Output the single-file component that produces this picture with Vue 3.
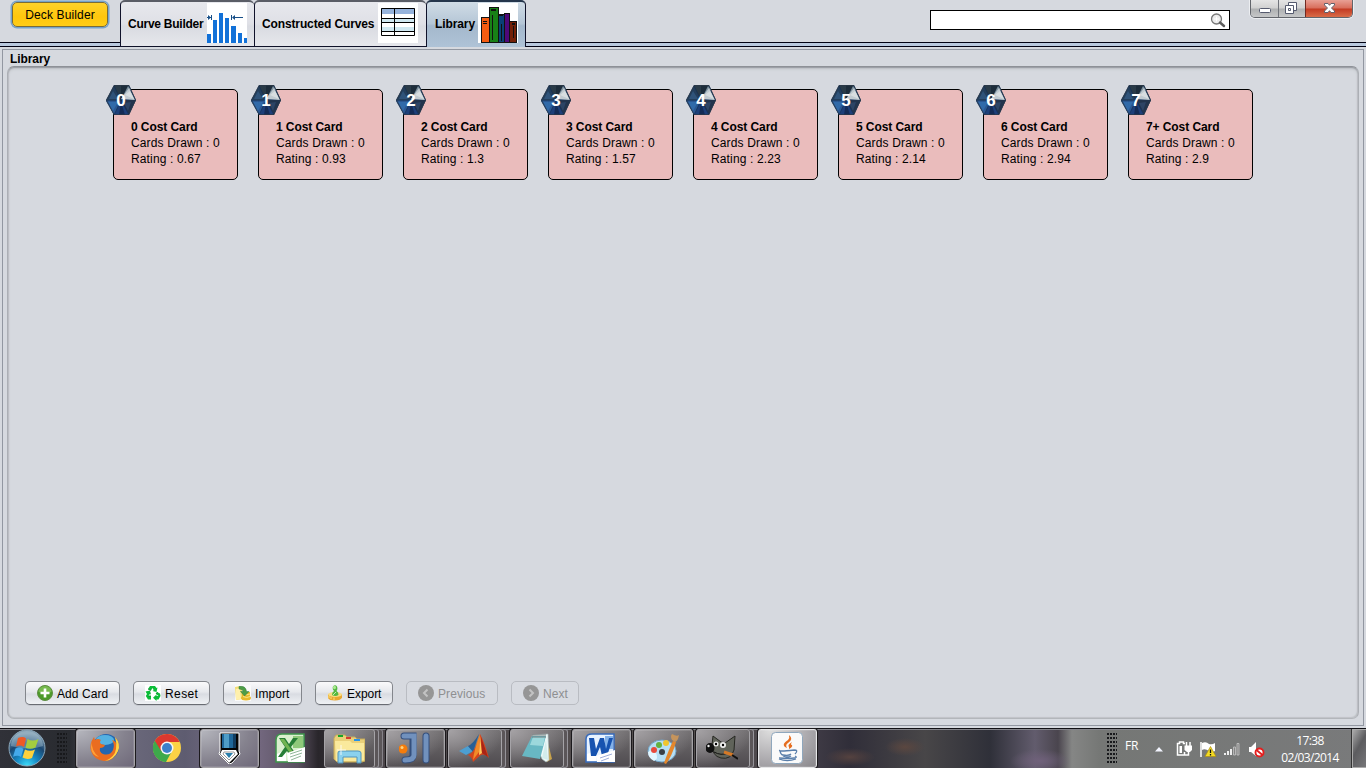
<script setup>
const cards = [
  { cost: '0', title: '0 Cost Card', rating: '0.67' },
  { cost: '1', title: '1 Cost Card', rating: '0.93' },
  { cost: '2', title: '2 Cost Card', rating: '1.3' },
  { cost: '3', title: '3 Cost Card', rating: '1.57' },
  { cost: '4', title: '4 Cost Card', rating: '2.23' },
  { cost: '5', title: '5 Cost Card', rating: '2.14' },
  { cost: '6', title: '6 Cost Card', rating: '2.94' },
  { cost: '7', title: '7+ Cost Card', rating: '2.9' }
]
const tasks = [
  { id: 'firefox', kind: 'open bright' },
  { id: 'chrome', kind: '' },
  { id: 'pen', kind: 'open bright' },
  { id: 'excel', kind: '' },
  { id: 'explorer', kind: 'open stack2' },
  { id: 'idea', kind: 'open' },
  { id: 'matlab', kind: 'open stack' },
  { id: 'notepad', kind: 'open stack' },
  { id: 'word', kind: 'open' },
  { id: 'paint', kind: 'open' },
  { id: 'gimp', kind: 'open stack' },
  { id: 'java', kind: 'open active' }
]
</script>

<template>
  <div class="screen">
    <header class="top">
      <button class="deck">Deck Builder</button>
      <nav class="tabs">
        <div class="tab t1">
          <span>Curve Builder</span>
          <svg width="40" height="40" viewBox="0 0 40 40">
            <rect width="40" height="40" fill="#fff" />
            <g fill="#1271d8">
              <rect x="0" y="31" width="4" height="9" /><rect x="6" y="17" width="4" height="23" />
              <rect x="12" y="10" width="4" height="30" /><rect x="18" y="15" width="4" height="25" />
              <rect x="24" y="23" width="5" height="17" /><rect x="31" y="30" width="4" height="10" />
              <rect x="37" y="35" width="3" height="5" />
            </g>
            <path d="M0 14.500h4M4.500 12v5M24.500 12v5M26 14.500h10" stroke="#174f88" />
            <path d="M1 12l3 2.500-3 2.500zM28 12l-3 2.500 3 2.500z" fill="#174f88" />
          </svg>
        </div>
        <div class="tab t2">
          <span>Constructed Curves</span>
          <svg width="40" height="40" viewBox="0 0 40 40">
            <rect width="40" height="40" fill="#fff" />
            <path d="M3 5h34v6H3z" fill="#96b3dc" />
            <path d="M3 15h34v4H3zM3 24h34v4H3z" fill="#d0e8f1" />
            <path d="M3.500 5.500h33v27h-33zM3 15.500h34M3 19.500h34M3 28.500h34M16.500 5v28" fill="none" stroke="#000" />
          </svg>
        </div>
        <div class="tab t3">
          <span>Library</span>
          <svg width="40" height="40" viewBox="0 0 40 40">
            <rect width="40" height="40" fill="#fff" />
            <g stroke="#111">
              <rect x="3.500" y="14.500" width="8" height="25" fill="#f55c12" />
              <rect x="20.500" y="11.500" width="6" height="28" fill="#0a4076" />
              <rect x="26.500" y="10.500" width="5" height="29" fill="#4e0879" />
              <rect x="31.500" y="18.500" width="7" height="21" fill="#732008" />
              <rect x="11.500" y="4.500" width="9" height="35" fill="#188017" />
              <path d="M5 18.500h4M5 20.500h4M14.500 12v25M23.500 21v17M35.500 23v12" />
              <path d="M13 7h5M21 12h4M34 21h3" stroke-width="2" />
            </g>
          </svg>
        </div>
      </nav>
      <div class="search">
        <svg width="16" height="16" viewBox="0 0 16 16">
          <circle cx="6.500" cy="6" r="5" fill="#ececec" stroke="#777" stroke-width="1.300" />
          <path d="M4 6h5M6.500 3.500v5" stroke="#fff" />
          <path d="M10 9.500l4 3.500" stroke="#5d5d5d" stroke-width="2.500" stroke-linecap="round" />
        </svg>
      </div>
      <div class="win">
        <div class="wb">
          <svg width="27" height="17" viewBox="0 0 27 17"><rect x="8.500" y="8.500" width="11" height="4" rx="1" fill="#fff" stroke="#555a6e" /></svg>
        </div>
        <div class="wb mid">
          <svg width="26" height="17" viewBox="0 0 26 17"><g fill="#fff" stroke="#555a6e"><path d="M9.500 2.500h8v8h-8z" /><path d="M6.500 5.500h8v8h-8zM9.500 8.500h2v2h-2z" fill-rule="evenodd" /></g></svg>
        </div>
        <div class="wb close">
          <svg width="47" height="17" viewBox="0 0 47 17"><path d="M18.500 3.500h3.500l1.500 1.800 1.500-1.800h3.500v1.500l-3 3 3 3v1.500H25l-1.500-1.800-1.500 1.800h-3.500V11l3-3-3-3z" fill="#fff" stroke="#62606c" /></svg>
        </div>
      </div>
    </header>

    <section class="frame">
      <h1>Library</h1>
      <div class="inner">
        <div class="cards">
          <article v-for="c in cards" :key="c.cost" class="card">
            <div class="gem">
              <svg width="30" height="30" viewBox="0 0 30 30">
                <path d="M8 0h15l7 15-7 15H8L0 16z" fill="#1c3b64" />
                <path d="M8 0h8l-1 15z" fill="#2a3b48" />
                <path d="M15 0h8l-8 15z" fill="#1d2d3b" />
                <path d="M22 1l3 4-10 10z" fill="#7b8f9c" />
                <path d="M23 3l6 12-14-1z" fill="#c0cad0" />
                <path d="M24 6l4 8-9-4z" fill="#d7dde0" />
                <path d="M30 15l-7 14-8-14z" fill="#22344d" />
                <path d="M25 17l-3 9-4-8z" fill="#2d4465" />
                <path d="M23 30H8l7-15z" fill="#1d3f79" />
                <path d="M19 30l-4-13-2 13z" fill="#142c56" />
                <path d="M8 30L0 15h15z" fill="#2a5792" />
                <path d="M2 17l10 0-5 9z" fill="#316aa9" />
                <path d="M0 15L8 1l7 14z" fill="#233e5b" />
                <path d="M3 14l4-8 5 8z" fill="#2f5379" />
                <path d="M8 1l7 14 8 15M15 15L8 30M0 15.500h15" stroke="#14263e" stroke-width=".7" opacity=".6" fill="none" />
                <path d="M8 .5h15l6.500 14.500L23 29.500H8L.5 15z" fill="none" stroke="#2c3a48" opacity=".75" />
              </svg>
              <b>{{ c.cost }}</b>
            </div>
            <strong>{{ c.title }}</strong>
            <span>Cards Drawn : 0</span>
            <span>Rating : {{ c.rating }}</span>
          </article>
        </div>
        <div class="actions">
          <button class="btn b1">
            <svg width="16" height="16" viewBox="0 0 16 16"><circle cx="8" cy="8" r="7.500" fill="#4d9a2b" stroke="#5f8d44" /><path d="M1.500 7a6.500 6 0 0 1 13 0q-6 2-13 0z" fill="#86c45c" opacity=".75" /><path d="M8 3.500v9M3.500 8h9" stroke="#fff" stroke-width="2.600" /></svg>
            <span>Add Card</span>
          </button>
          <button class="btn b2">
            <svg width="16" height="16" viewBox="0 0 16 16"><rect width="16" height="16" fill="#fff" /><g fill="#0bbd38"><path d="M5 1h5l1.500 2 1-.5-1 4.500L7.500 6l1.200-.8L7.500 3 6 5.500 3 4z" /><path d="M.5 6.500L5 5.500l1 4-1.200-.6L3.500 11H6v3.500H3L.8 11l1.200-2z" /><path d="M12 7l3 1.500.5 2.500-2 3.500h-2V16L8 12.700 11.500 9.500V11h2L11 9z" /></g><path d="M3 4l3 1.500M3.500 11H6M11 9l1.500-2" stroke="#087b2a" stroke-width=".8" /></svg>
            <span>Reset</span>
          </button>
          <button class="btn b3">
            <svg width="16" height="16" viewBox="0 0 16 16"><rect width="16" height="16" fill="#fafafa" /><path d="M0 2l5-1 2 2v11l-6 1z" fill="#f2dc72" /><path d="M1 4l4-1 1 11-5 1z" fill="#fff0ac" /><g fill="#e9b92c"><ellipse cx="11" cy="13" rx="5" ry="2.500" /><path d="M7 7h8v6H7z" /></g><path d="M8 11.500q4 2 7 0M8 9q4 1.500 7 0" stroke="#f7e583" fill="none" /><path d="M4 1.500q7-1 7.500 5H14L9.500 11 5.500 6.500H8Q8 4 4 4z" fill="#4e9d46" stroke="#2e7a3f" stroke-width=".5" /></svg>
            <span>Import</span>
          </button>
          <button class="btn b4">
            <svg width="16" height="16" viewBox="0 0 16 16"><path d="M1 9v4q1 2.500 7 2.500t7-3V9z" fill="#e8a731" /><ellipse cx="8" cy="9.500" rx="7" ry="2.500" fill="#f9dc83" /><path d="M5 10q0-3 2-4Q5 4 6 1.500 8-1 10 1.500 11 4 9.500 6q2 1 2 4-3 2-6.500 0z" fill="#54b843" /><ellipse cx="7.500" cy="2.500" rx="1.500" ry="1.800" fill="#aceb92" /><path d="M6 10l3-3" stroke="#c1efad" /><path d="M2 11v2M4 12v2M7 12.500V15" stroke="#ffdf79" /></svg>
            <span>Export</span>
          </button>
          <button class="btn b5 off">
            <svg width="16" height="16" viewBox="0 0 16 16"><circle cx="8" cy="8" r="8" fill="#969696" /><path d="M9.500 4.500L6 8l3.500 3.500" fill="none" stroke="#c3c3c3" stroke-width="2" /></svg>
            <span>Previous</span>
          </button>
          <button class="btn b6 off">
            <svg width="16" height="16" viewBox="0 0 16 16"><circle cx="8" cy="8" r="8" fill="#969696" /><path d="M6.500 4.500L10 8l-3.500 3.500" fill="none" stroke="#c3c3c3" stroke-width="2" /></svg>
            <span>Next</span>
          </button>
        </div>
      </div>
    </section>

    <footer class="bar">
      <svg class="orb" width="38" height="38" viewBox="0 0 38 38">
        <defs>
          <radialGradient id="orb" cx=".5" cy="1" r=".9"><stop offset="0" stop-color="#3fe0fa" /><stop offset=".35" stop-color="#1689c5" /><stop offset=".7" stop-color="#1c4872" /><stop offset="1" stop-color="#7c98ac" /></radialGradient>
        </defs>
        <circle cx="19" cy="19" r="18" fill="url(#orb)" stroke="#8ca8bb" />
        <path d="M3 17a16 15 0 0 1 32 0q-15 5-32 0z" fill="#b9d1df" opacity=".38" />
        <path d="M10 9q5-2 8 .5L16 18q-4-2.500-8-.5z" fill="#ee5a25" />
        <path d="M19.500 10q5 3 11 0l-3 8.500q-5 2.500-10 .3z" fill="#a3cd3f" />
        <path d="M7.500 19.500q4-2 8 .2L13 28q-3-2.500-8-.3z" fill="#44a9ea" />
        <path d="M17 20.500q5 2.500 10 0L24 29q-5 2-9.500-.5z" fill="#fdd13c" />
      </svg>
      <div class="grip g1"></div>
      <div class="tasks">
        <div v-for="t in tasks" :key="t.id" class="slot">
          <div class="task" :class="t.kind">
            <svg width="32" height="32" viewBox="0 0 32 32">
              <g v-if="t.id === 'firefox'">
                <circle cx="17" cy="15" r="13" fill="#2366b0" /><ellipse cx="16" cy="8" rx="9" ry="5" fill="#54b1e2" />
                <path d="M25 4q7 7 4 15-4 10-14 10-10-1-13-10Q0 12 5 5l1 3q3-2 6 0-2 2 0 4l4 1q-1 3-5 3-1 4 3 6 7 2 10-4 2-6-1-10 4 1 5 5 1-4-3-9z" fill="#ea6d20" />
                <path d="M26 5q6 7 3 14-4 9-13 10 10-4 11-12 1-6-1-12z" fill="#ffd443" />
                <path d="M3 10q-1 9 7 15-8-2-8-10z" fill="#ffa136" />
              </g>
              <g v-else-if="t.id === 'chrome'">
                <circle cx="16" cy="16" r="14" fill="#fbd245" />
                <path d="M16 16L3.800 9A14 14 0 0 1 28.500 10H16z" fill="#dc382e" />
                <path d="M3.800 9A14 14 0 0 0 15 30l6-11-5-3z" fill="#3eaa4b" />
                <path d="M3.800 9L10 19l6-3V9z" fill="#dc382e" /><path d="M3.800 9l6.500 11 4 2L15 30A14 14 0 0 1 3.800 9z" fill="#3eaa4b" />
                <circle cx="16" cy="16" r="6.500" fill="#f6f6f6" /><circle cx="16" cy="16" r="5" fill="#3d80cc" />
              </g>
              <g v-else-if="t.id === 'pen'">
                <path d="M7 1h19v18l1 3-8 9-3 1-10-10 1-3z" fill="#050505" stroke="#fff" stroke-width="1" />
                <path d="M9 2h14v14H9z" fill="#1f679a" /><path d="M11 2h5v14h-5z" fill="#4f9dc7" /><path d="M20 2h3v14h-3z" fill="#123d60" />
                <path d="M9 18h14l2 4-9 9-9-9z" fill="#fff" /><path d="M11 20h10l1 2-6 6-6-6z" fill="none" stroke="#999" /><path d="M12 21h8l-4 5z" fill="#297fac" />
              </g>
              <g v-else-if="t.id === 'excel'">
                <path d="M1 8q0-6 6-6h22v28H1z" fill="#d9efce" stroke="#3d944b" stroke-width="1.500" />
                <path d="M18 4h10v12H18z" fill="#8fc87a" /><path d="M2 22l9-4v11H2z" fill="#fff" />
                <path d="M4 6h6l4 6 4-6h5l-7 9 7 10h-7l-4-6-5 6H3l7-10z" fill="#277e36" /><path d="M5 7h4l12 17h-4z" fill="#72b452" />
                <path d="M12 21l18-6v15H13z" fill="#fff" /><path d="M15 22l12-4M15 25l12-4M16 28l10-4" stroke="#91b69b" />
              </g>
              <g v-else-if="t.id === 'explorer'">
                <path d="M1 6l2-3h9l2 2h8l2 2h8v22l-3 1H4l-3-3z" fill="#ead079" stroke="#c5aa5b" />
                <path d="M2 9h15l2 2h12v17l-3 1H3z" fill="#fae99c" />
                <path d="M5 4h5" stroke="#16a62b" stroke-width="2" /><path d="M13 6h5" stroke="#d73c2f" stroke-width="2" /><path d="M21 8h6" stroke="#2693ea" stroke-width="2" />
                <path d="M5 31V21q0-2 2-2h18q3 0 3 2v10h-4v-6H10v6z" fill="#8bd1ed" stroke="#5094bd" /><path d="M8 13v10M4 18h9" stroke="#fff" opacity=".8" />
              </g>
              <g v-else-if="t.id === 'idea'" stroke-linecap="round" fill="none">
                <path d="M5 4h9v19q0 5-8 5" stroke="#344f7c" stroke-width="7" /><path d="M27 4v24" stroke="#344f7c" stroke-width="7" />
                <path d="M5 4h10v19q0 5-9 5" stroke="#7191bd" stroke-width="5" /><path d="M27 4v24" stroke="#7191bd" stroke-width="5" />
                <circle cx="4" cy="17" r="4.500" fill="#f57c0b" /><circle cx="3" cy="15.500" r="1.500" fill="#ffd17b" />
              </g>
              <g v-else-if="t.id === 'matlab'">
                <path d="M1 19l9-5 5 5-7 4z" fill="#4c9fd2" /><path d="M10 14q5-2 11-12l-6 18z" fill="#285f95" />
                <path d="M22 2q4 7 9 24-4-5-8-3-4 3-8 7-1-5-5-7 7-2 12-21z" fill="#d5441c" />
                <path d="M22 2l-1 18q-3 4-6 8 1-10 7-26z" fill="#f28b28" /><path d="M22 4l2 17-3 2z" fill="#ffc95a" /><path d="M23 5l7 20-6-4z" fill="#a92516" />
              </g>
              <g v-else-if="t.id === 'notepad'">
                <path d="M26 3l6 24-5 3z" fill="#c9a34c" /><path d="M12 3l16-1 1 26-3 2-4-3z" fill="#edf8f8" stroke="#a6b8b9" stroke-width=".6" />
                <path d="M12 4h14l-6 23-18-3z" fill="#68b8c3" /><path d="M13 5h12l-2 9-13-1z" fill="#9cd8dc" />
                <path d="M13 2v4m2-4v4m2-4v4m2-4v4m2-4v4m2-4v4m2-4v4" stroke="#717b7c" /><path d="M26 8l2 20-6-2z" fill="#d3ecec" />
              </g>
              <g v-else-if="t.id === 'word'">
                <path d="M1 7q0-5 6-5h22v28H1z" fill="#e7f2ff" stroke="#386bbb" stroke-width="1.500" /><path d="M20 4h8v13h-8z" fill="#84b2e8" />
                <path d="M2 22l9-3v10H2z" fill="#fff" /><path d="M4 6h5l2 11 4-11h4l2 11 3-11h4l-6 18h-5l-2-9-4 9H6z" fill="#1753b0" />
                <path d="M11 24l19-6v12H12z" fill="#fff" /><path d="M15 26l12-4M16 29l8-3" stroke="#9daddb" />
              </g>
              <g v-else-if="t.id === 'paint'">
                <ellipse cx="15" cy="19" rx="14" ry="11" fill="#b6dff5" stroke="#72a4c7" /><path d="M1 20q5-4 8 1 3 5-2 8-6-3-6-9z" fill="#e3f6ff" />
                <circle cx="7" cy="18" r="3" fill="#e74b3d" /><circle cx="12" cy="13" r="3" fill="#63b143" /><circle cx="19" cy="11" r="3" fill="#f1c52e" /><circle cx="15" cy="20" r="3" fill="#3b4046" />
                <path d="M17 31q5-14 9-22l3 1q-4 14-10 22z" fill="#e4872c" /><path d="M25 8q-2-4 0-6 5 3 7 1-1 6-4 7z" fill="#c5945c" />
              </g>
              <g v-else-if="t.id === 'gimp'">
                <path d="M6 13l1-9 8 6 4 1 10-7-1 14q-3 10-13 8-9-2-9-13z" fill="#60635a" stroke="#262722" />
                <ellipse cx="4" cy="16" rx="4.500" ry="5" fill="#111" /><circle cx="2.500" cy="14" r="1.200" fill="#eee" />
                <circle cx="10" cy="12" r="2.500" fill="#eee" /><circle cx="17" cy="13" r="3" fill="#eee" /><circle cx="10" cy="12" r="1.200" /><circle cx="17" cy="13" r="1.200" />
                <path d="M8 20q7 4 14 1" stroke="#111" fill="none" /><path d="M18 20l9 3" stroke="#d57927" stroke-width="3" /><path d="M26 23l6 4" stroke="#111" stroke-width="2" />
              </g>
              <g v-else>
                <rect x=".5" y=".5" width="31" height="31" rx="4" fill="#fafafa" stroke="#8fa7bd" />
                <path d="M16 16q-7-3 1-8 2-2 1-5 5 4-1 8-3 2-1 5zM18 15q-2-2 3-5-2 3 0 3 1 2-3 4z" fill="#e66e20" />
                <g fill="none" stroke="#597eaa" stroke-width="1.300"><path d="M9 18q-3 2 14 0M9 19q1 4 3 4 6 1 8-1M23 18q5 0 1 4M12 24q5 2 8 0M8 27q8 3 17 0M24 24q6 3-16 2" /></g>
              </g>
            </svg>
          </div>
        </div>
      </div>
      <div class="tray">
        <div class="grip g2"></div>
        <span class="lang">FR</span>
        <svg class="up" width="8" height="5" viewBox="0 0 8 5"><path d="M0 4.500L4 0l4 4.500z" fill="#f3f5ff" /></svg>
        <svg class="plug" width="16" height="16" viewBox="0 0 16 16"><g fill="none" stroke="#fff" stroke-width="1.500"><path d="M9 2.500H7.500V1h-4v1.500h-2V14h7v-3M10.500 1v4M14 1v4M12.500 11v3H8" /></g><path d="M8.500 4.500H16V9l-2 2h-3L8.500 9zM3.500 5H6v7H3.500z" fill="#fff" /></svg>
        <svg class="flag" width="17" height="17" viewBox="0 0 17 17"><path d="M1 1v15" stroke="#fff" stroke-width="1.500" /><path d="M2 2q4-2 7 1 3 1 6-1v8q-3 2-6 0-4-3-7-1z" fill="#fff" /><path d="M10.500 5.500l5.500 10H5z" fill="#f5dc22" stroke="#a98c13" stroke-width=".7" /><path d="M10.500 8.500v3.500m0 1v1.500" stroke="#111" stroke-width="1.300" /></svg>
        <svg class="signal" width="16" height="13" viewBox="0 0 16 13"><g fill="#eee"><path d="M0 10h2v2H0zM3 8h2v4H3z" /><path d="M6 6h2v6H6z" /></g><g fill="#858585" stroke="#c5c5c5" stroke-width=".8"><path d="M9.500 4h2v8h-2zM13 .5h2V12h-2z" /></g></svg>
        <svg class="sound" width="16" height="17" viewBox="0 0 16 17"><path d="M0 6h2l5-5v14l-5-4H0z" fill="#fff" /><circle cx="10.500" cy="11.500" r="4" fill="#fff" stroke="#e41e1e" stroke-width="1.900" /><path d="M7.500 9l6 5" stroke="#e41e1e" stroke-width="1.900" /></svg>
        <div class="clock"><span>17:38</span><span>02/03/2014</span></div>
        <div class="show"></div>
      </div>
    </footer>
  </div>
</template>

<style>
body { overflow: hidden; }
</style>
<style scoped>
* { box-sizing: border-box; }
.screen { width: 1366px; height: 768px; display: flex; flex-direction: column; background: #d6d9df; font: 12px/16px "Liberation Sans", Arial, sans-serif; color: #000; overflow: hidden; }
svg { display: block; flex: none; }
button { font: inherit; color: inherit; padding: 0; margin: 0; }
span, b, strong { white-space: nowrap; }
.top { height: 47px; flex: none; display: flex; align-items: flex-start; background: linear-gradient(#d6d9df 42px, #020213 42px, #020213 43px, #b9c9de 43px, #b9c9de 46px, #020213 46px); }
.deck { width: 96px; height: 25px; margin: 2px 12px 0 12px; border: 1px solid #7a6b38; border-radius: 5px; background: linear-gradient(#ffd22b, #ffc60d 60%, #ffcd18); box-shadow: 0 0 0 1.500px #76a3cc; line-height: 22px; letter-spacing: .14px; }
.tabs { display: flex; height: 47px; }
.tab { display: flex; height: 47px; align-items: flex-start; border: 1px solid #10122a; border-top: 2px solid #5a5d66; border-right-width: 0; border-radius: 5px 5px 0 0; background: linear-gradient(#e7e8ed, #dfe0e6 50%, #d9dbe1 55%, #e6e7ec); font-weight: bold; }
.tab span { margin-top: 14px; line-height: 16px; }
.tab svg { margin-top: 1px; margin-left: auto; }
.t1 { width: 134px; padding: 0 7px 0 7px; letter-spacing: -.25px; }
.t2 { width: 172px; padding: 0 8px 0 7px; letter-spacing: -.13px; }
.t3 { width: 100px; padding: 0 7px 0 8px; letter-spacing: -.1px; border-right-width: 1px; border-bottom: 0; border-top-color: #25364c; background: linear-gradient(#d0dce6, #b5c6d6 48%, #a4b8cc 53%, #afc3d7); }
.search { width: 300px; height: 20px; margin: 10px 20px 0 404px; border: 1px solid #000; background: #fff; display: flex; justify-content: flex-end; padding: 2px 3px 0 0; }
.win { width: 103px; height: 18px; display: flex; border: 1px solid #62656b; border-top: 0; border-radius: 0 0 5px 5px; overflow: hidden; box-shadow: 0 0 0 1px #eceef1; }
.wb { width: 28px; background: linear-gradient(#e5e5e5, #d1d1d1 8px, #aeb0b1 9px, #c6c7c8); }
.mid { width: 27px; border-left: 1px solid #70737a; }
.close { width: 47px; border-left: 1px solid #702a22; background: linear-gradient(#e8a095, #d86e5c 8px, #c33b24 9px, #d96c48); }
.frame { height: 677px; flex: none; margin: 2px 2px 0; border: 1px solid #9297a1; display: flex; flex-direction: column; padding: 0 4px 6px; }
h1 { font-size: 12px; line-height: 16px; height: 16px; margin: 1px 0 0 3px; flex: none; letter-spacing: -.08px; }
.inner { flex: 1; margin-top: -1px; border: 1px solid #acafb5; border-top-color: #8e9197; border-bottom-color: #b3b6bb; border-radius: 7px; box-shadow: inset 0 1px 1px #9a9da3, inset 0 2px 3px #bdc0c5, inset 1px 0 1px #c0c3c8, inset -1px -1px 1px #c0c3c8; display: flex; flex-direction: column; justify-content: space-between; padding: 22px 17px 13px; }
.cards { display: flex; gap: 20px; padding-left: 88px; }
.card { position: relative; width: 125px; height: 91px; border: 1px solid #000; border-radius: 5px; background: #eabcbc; display: flex; flex-direction: column; padding: 29px 0 0 17px; }
.card span { letter-spacing: .14px; }
.card strong { letter-spacing: -.08px; }
.gem { position: absolute; left: -8px; top: -5px; width: 30px; height: 30px; }
.gem b { position: absolute; inset: 0; text-align: center; line-height: 31px; font-size: 17px; color: #fff; }
.actions { display: flex; gap: 13px; }
.btn { height: 24px; display: flex; align-items: center; padding: 0 0 0 11px; border: 1px solid #83868c; border-bottom-color: #696c73; border-radius: 5px; background: linear-gradient(#fafafb, #e6e8ec 45%, #d9dce2 55%, #eff1f4); gap: 4px; box-shadow: 0 1px 0 #c5c8ce; }
.btn svg { position: relative; top: 0; }
.btn span { padding-top: 1px; letter-spacing: .08px; }
.b1 { width: 95px; } .b2 { width: 77px; } .b3 { width: 79px; } .b4 { width: 78px; } .b5 { width: 92px; } .b6 { width: 68px; }
.b2 span { letter-spacing: .4px; }
.b4 span { letter-spacing: -.05px; }
.off { color: #8e8f91; border-color: #b9bcc2; background: #d8dbe1; box-shadow: none; }
.bar { height: 40px; flex: none; margin-top: 2px; display: flex; border-top: 1px solid #101014; box-shadow: inset 0 1px 0 #85858b;
  background:
    radial-gradient(ellipse 20px 9px at 905px 18px, #5b4740, transparent),
    radial-gradient(ellipse 25px 9px at 850px 28px, #55423f, transparent),
    radial-gradient(ellipse 30px 12px at 1040px 32px, #70617b, transparent),
    radial-gradient(ellipse 30px 22px at 355px 30px, #72595b, transparent),
    linear-gradient(90deg, #303138 0, #292b30 70px, #6c6a7c 120px, #5e5c70 185px, #7c708a 245px, #59505f 298px, #29262b 318px, #4e484c 390px, #55504f 720px, #45404a 800px, #302e39 850px, #484648 925px, #2f3039 990px, #625c6d 1035px, #4a454e 1058px, #858685 1072px, #757775 1100px, #797a7b 1366px); }
.orb { margin: 0 0 0 8px; }
.grip { width: 10px; height: 30px; background: radial-gradient(circle at 1px 1px, #18191c 1px, transparent 1.200px) 0 0 / 3px 4px; filter: drop-shadow(.5px .5px 0 #a0a0a0); }
.g1 { margin: 4px 9px 0 11px; }
.tasks { display: flex; }
.slot { width: 62px; height: 39px; }
.task { width: 59px; height: 39px; display: flex; justify-content: center; align-items: center; }
.slot .task { padding: 0 2px 2px 0; }
.open { border: 1px solid #a5a3a7; border-radius: 3px; background: radial-gradient(ellipse at 0 0, #a5a2a5, transparent 75%), linear-gradient(#716e70, #4f4b4f); box-shadow: inset 0 0 0 1px #ffffff20, 0 0 0 1px #1c1a1d; }
.bright { background: radial-gradient(ellipse at 0 0, #b6b7be, #85828e 60%, transparent), #6e6879; }
.active { border-color: #e6e6e8; background: radial-gradient(ellipse at 20% 0, #ddd, #aaa8ac 60%, #88868a); }
.stack { width: 54px; box-shadow: 4px 0 0 -1px #5b5659, 4px 0 0 0 #96949a, 0 0 0 1px #1c1a1d; }
.stack2 { width: 51px; box-shadow: 4px 0 0 -1px #5b5659, 4px 0 0 0 #96949a, 8px 0 0 -1px #5b5659, 8px 0 0 0 #858288; }
.tray { display: flex; margin-left: auto; color: #fff; font-family: "Open Sans", "Noto Sans", sans-serif; }
.g2 { margin: 4px 0 0; }
.lang { width: 17px; margin: 9px 0 0 8px; font-size: 12px; letter-spacing: -.1px; }
.up { margin: 18px 0 0 13px; }
.plug { margin: 12px 0 0 13px; }
.flag { margin: 12px 0 0 8px; }
.signal { margin: 14px 0 0 7px; }
.sound { margin: 12px 0 0 9px; }
.clock { width: 60px; margin: 3px 12px 0 15px; display: flex; flex-direction: column; align-items: center; font-size: 12px; line-height: 17px; letter-spacing: -.6px; }
.show { width: 14px; height: 39px; border: 1px solid #aaa; border-right: 0; background: linear-gradient(120deg, #aaa, #5c5c5f 45%, #77777a); box-shadow: -1px 0 0 #333; }
</style>
